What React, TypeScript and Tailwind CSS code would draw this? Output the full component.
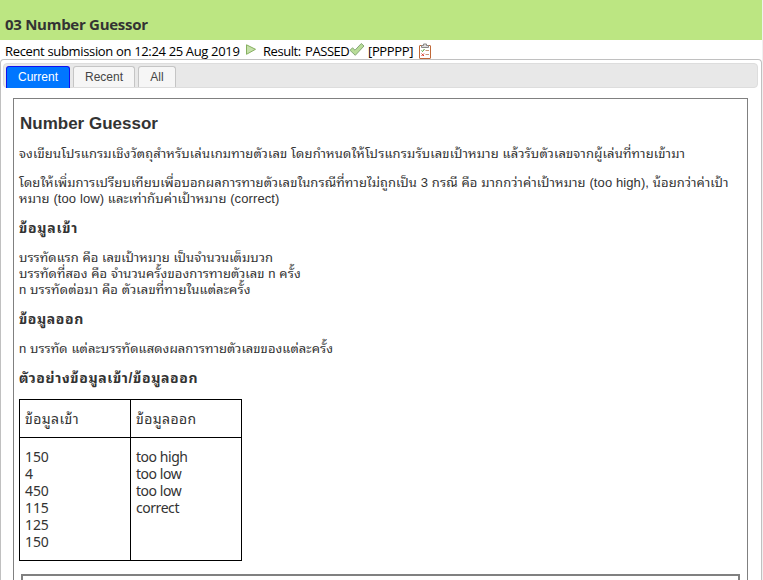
import React from "react";

const SANS = "font-['Liberation_Sans','Noto_Sans_Thai_Looped','Loma','Waree','Noto_Sans_Thai','Noto_Sans',sans-serif]";
const TREB = "font-['Open_Sans','Noto_Sans',sans-serif]";

function Line({ children, cls = "" }: { children: React.ReactNode; cls?: string }) {
  return (
    <div className="h-4">
      <span className={`block whitespace-nowrap leading-4 ${cls}`}>{children}</span>
    </div>
  );
}

function Play() {
  return (
    <svg width="12" height="12" viewBox="0 0 12 12">
      <path d="M1.500 .8 10.500 5.300 1.500 10.300Z" fill="#c4e0a8" stroke="#86b060" strokeLinejoin="round" />
    </svg>
  );
}

function Check() {
  return (
    <svg width="16" height="16" viewBox="0 0 16 16">
      <path d="M1 8.300 3.500 5.800 6 8.200 12.300 1.500 15 4 6.300 13.300Z" fill="#b8dc98" stroke="#86a878" strokeLinejoin="round" />
    </svg>
  );
}

function Clipboard() {
  return (
    <svg width="16" height="16" viewBox="0 0 16 16">
      <rect x="2.500" y="2.500" width="11" height="13" rx=".5" fill="#fff" stroke="#c06838" />
      <path d="M4.500 4.500v-2h2v-1.500h3v1.500h2v2z" fill="#ddd" stroke="#888" />
      <path d="m4.500 7.500 1 1 2-2.500" fill="none" stroke="#4aa02c" />
      <path d="m4.500 10.500 2.500 2.500m0-2.500-2.500 2.500" stroke="#d84030" />
      <path d="M8.500 7.500H12M8.500 11.500H12" stroke="#c89878" />
    </svg>
  );
}

export default function App() {
  return (
    <div className={`h-[580px] w-[763px] overflow-hidden border-r border-[#f0f0f0] bg-white text-[#333] ${SANS}`}>
      <header className="h-10 bg-[#bce682] pl-[5px] pt-[14px]">
        <h1 className={`text-[15px] font-bold leading-5 tracking-[-0.28px] ${TREB}`}>03 Number Guessor</h1>
      </header>
      <div className={`flex h-[19px] items-center whitespace-nowrap pl-[5px] pt-1 text-[13px] tracking-[-0.34px] text-black ${TREB}`}>
        <span className="w-[240px]">Recent submission on 12:24 25 Aug 2019</span>
        <span className="w-[18px] pb-1"><Play /></span>
        <span className="w-[86px] [word-spacing:1.500px] tracking-[-0.45px]">Result: PASSED</span>
        <span className="w-[19px] pb-1"><Check /></span>
        <span className="w-[49px] tracking-[-0.35px]">[PPPPP]</span>
        <span className="pb-[2px]"><Clipboard /></span>
      </div>
      <main className="h-[521px] rounded-t border border-b-0 border-[#c0c0c0] px-[2px] pt-[3px]">
        <nav className="flex h-[25px] w-[755px] gap-[3px] rounded border border-[#ddd] bg-[#e8e8e8] pl-[2px] pt-[2px] text-[12px]">
          <a className="h-[22px] w-[64px] rounded-t-[3px] border border-b-0 border-[#1010f0] bg-[#0076ff] pl-[11px] leading-[20px] text-white">Current</a>
          <a className="h-[21px] w-[62px] rounded-t-[3px] border border-b-0 border-[#c5c5c5] bg-[#f6f6f6] text-center leading-[20px] text-[#454545]">Recent</a>
          <a className="h-[21px] w-[38px] rounded-t-[3px] border border-b-0 border-[#c5c5c5] bg-[#f6f6f6] text-center leading-[20px] text-[#454545]">All</a>
        </nav>
        <section className="ml-[10px] mt-[10px] h-[500px] w-[735px] border border-[#808080] pl-[5px] text-[13px]">
          <h2 className="pl-px pt-[15px] text-[17px] font-bold leading-5">Number Guessor</h2>
          <div className="pt-[12px]">
            <Line cls="tracking-[0.13px]">จงเขียนโปรแกรมเชิงวัตถุสำหรับเล่นเกมทายตัวเลข โดยกำหนดให้โปรแกรมรับเลขเป้าหมาย แล้วรับตัวเลขจากผู้เล่นที่ทายเข้ามา</Line>
          </div>
          <div className="pt-[13px]">
            <Line cls="tracking-[0.1px]">โดยให้เพิ่มการเปรียบเทียบเพื่อบอกผลการทายตัวเลขในกรณีที่ทายไม่ถูกเป็น 3 กรณี คือ มากกว่าค่าเป้าหมาย (too high), น้อยกว่าค่าเป้า</Line>
            <Line cls="tracking-[0.1px]">หมาย (too low) และเท่ากับค่าเป้าหมาย (correct)</Line>
          </div>
          <h3 className="pt-[13px] text-[14px] font-bold"><Line cls="tracking-[0.7px]">ข้อมูลเข้า</Line></h3>
          <div className="pt-[14px]">
            <Line cls="tracking-[0.04px]">บรรทัดแรก คือ เลขเป้าหมาย เป็นจำนวนเต็มบวก</Line>
            <Line cls="tracking-[0.08px]">บรรทัดที่สอง คือ จำนวนครั้งของการทายตัวเลข n ครั้ง</Line>
            <Line cls="tracking-[0.12px]">n บรรทัดต่อมา คือ ตัวเลขที่ทายในแต่ละครั้ง</Line>
          </div>
          <h3 className="pt-[13px] text-[14px] font-bold"><Line cls="tracking-[0.55px]">ข้อมูลออก</Line></h3>
          <div className="pt-[14px]">
            <Line cls="tracking-[0.06px]">n บรรทัด แต่ละบรรทัดแสดงผลการทายตัวเลขของแต่ละครั้ง</Line>
          </div>
          <h3 className="pt-[13px] text-[14px] font-bold"><Line cls="tracking-[0.6px]">ตัวอย่างข้อมูลเข้า/ข้อมูลออก</Line></h3>
          <table className="mt-[13px] w-[223px] table-fixed border-collapse text-[14px] leading-[17px]">
            <tbody>
              <tr className="h-[38px] tracking-[0.4px]">
                <td className="border border-black pl-[5px] pt-px">ข้อมูลเข้า</td>
                <td className="border border-black pl-[5px] pt-px">ข้อมูลออก</td>
              </tr>
              <tr className="h-[123px] align-top font-['Noto_Sans',sans-serif]">
                <td className="whitespace-pre border border-black pl-[5px] pt-[10px] tracking-[-0.1px]">{"150\n4\n450\n115\n125\n150"}</td>
                <td className="whitespace-pre border border-black pl-[5px] pt-[10px] tracking-[-0.45px]">{"too high\ntoo low\ntoo low\ncorrect"}</td>
              </tr>
            </tbody>
          </table>
          <div className="ml-[2px] mt-[13px] h-10 w-[719px] border-2 border-[#808080]" />
        </section>
      </main>
    </div>
  );
}
